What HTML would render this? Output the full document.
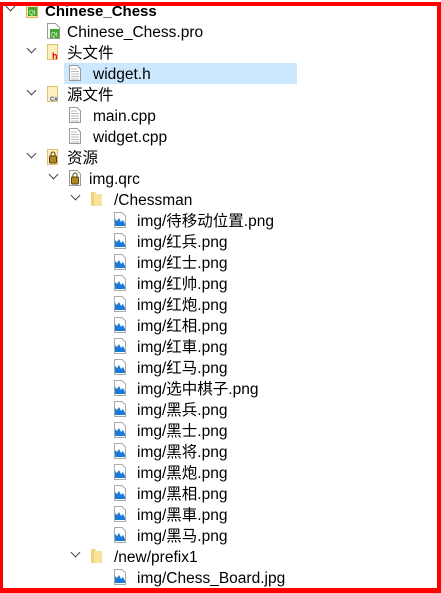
<!DOCTYPE html>
<html><head><meta charset="utf-8"><style>
body{margin:0;width:441px;height:593px;overflow:hidden;background:#fff;position:relative;font-family:"Liberation Sans","Noto Sans CJK SC",sans-serif;font-size:15.5px;color:#000}
.frame{position:absolute;left:0;top:2px;border-left:3px solid #f00;border-top:4px solid #f00;border-right:4px solid #f00;border-bottom:5px solid #f00;box-sizing:border-box;width:441px;height:591px}
.r{position:absolute;height:21px;line-height:23px;white-space:nowrap}
.sel{position:absolute;left:64px;top:63px;width:233px;height:21px;background:#cce8ff}
.ar{position:absolute;width:6px;height:6px;border-right:1.6px solid #444;border-bottom:1.6px solid #444;transform:rotate(45deg)}
svg{position:absolute}
</style></head><body>
<div class="sel"></div>

<div class="ar" style="left:7px;top:3px"></div>
<div class="ar" style="left:28px;top:45px"></div>
<div class="ar" style="left:28px;top:87px"></div>
<div class="ar" style="left:28px;top:150px"></div>
<div class="ar" style="left:50px;top:171px"></div>
<div class="ar" style="left:72px;top:192px"></div>
<div class="ar" style="left:72px;top:549px"></div>

<svg style="left:26px;top:2px" width="12" height="16"><rect x="0.5" y="0.5" width="11" height="15" fill="#fbe9a8" stroke="#d9b44a"/><rect x="2" y="5" width="9" height="9" fill="#41a62a"/><text x="3" y="12.5" font-size="6" fill="#fff" font-family="Liberation Sans">Qt</text></svg>
<svg style="left:47px;top:23px" width="13" height="16"><path d="M0.5 0.5H8.5L12.5 4.5V15.5H0.5Z" fill="#fff" stroke="#999"/><rect x="3" y="6" width="9" height="9" fill="#41a62a"/><text x="4" y="13.5" font-size="6" fill="#fff" font-family="Liberation Sans">Qt</text></svg>
<svg style="left:47px;top:44px" width="12" height="16"><rect x="0.5" y="0.5" width="10" height="15" fill="#fdf0c0" stroke="#e0c070"/><text x="5" y="15" font-size="9" font-weight="bold" fill="#d00" font-family="Liberation Sans">h</text></svg>
<svg style="left:47px;top:86px" width="14" height="16"><rect x="0.5" y="0.5" width="10" height="15" fill="#fdf0c0" stroke="#e0c070"/><text x="3" y="15" font-size="6" font-weight="bold" fill="#2a5fa8" font-family="Liberation Sans">C#</text></svg>
<svg style="left:47px;top:149px" width="12" height="16"><rect x="0.5" y="0.5" width="10" height="15" fill="#fdf0c0" stroke="#e0c070"/><rect x="2.5" y="7" width="7" height="7" rx="1" fill="#b08a20" stroke="#5a4010"/><path d="M4 7V5a2 2 0 0 1 4 0V7" fill="none" stroke="#5a4010"/></svg>
<svg style="left:69px;top:170px" width="12" height="16"><path d="M0.5 0.5H8L11.5 4V15.5H0.5Z" fill="#fff" stroke="#999"/><rect x="2.5" y="7" width="7" height="7" rx="1" fill="#b08a20" stroke="#5a4010"/><path d="M4 7V5a2 2 0 0 1 4 0V7" fill="none" stroke="#5a4010"/></svg>
<svg style="left:91px;top:191px" width="12" height="16"><path d="M0 1H4L5 3H11V15H0Z" fill="#f3d37a"/><rect x="3" y="3" width="8" height="12" fill="#f8e39c"/></svg>
<svg style="left:91px;top:548px" width="12" height="16"><path d="M0 1H4L5 3H11V15H0Z" fill="#f3d37a"/><rect x="3" y="3" width="8" height="12" fill="#f8e39c"/></svg>

<svg style="left:69px;top:65px" width="12" height="16"><path d="M0.5 0.5H8L11.5 4V15.5H0.5Z" fill="#fff" stroke="#999"/><path d="M2 4H8M2 6.5H10M2 9H10M2 11.5H10M2 14H10" stroke="#bbb"/></svg>
<svg style="left:69px;top:107px" width="12" height="16"><path d="M0.5 0.5H8L11.5 4V15.5H0.5Z" fill="#fff" stroke="#999"/><path d="M2 4H8M2 6.5H10M2 9H10M2 11.5H10M2 14H10" stroke="#bbb"/></svg>
<svg style="left:69px;top:128px" width="12" height="16"><path d="M0.5 0.5H8L11.5 4V15.5H0.5Z" fill="#fff" stroke="#999"/><path d="M2 4H8M2 6.5H10M2 9H10M2 11.5H10M2 14H10" stroke="#bbb"/></svg>

<div class="r" style="left:45px;top:0;font-weight:bold;font-size:15px">Chinese_Chess</div>
<div class="r" style="left:67px;top:21px">Chinese_Chess.pro</div>
<div class="r" style="left:67px;top:42px">头文件</div>
<div class="r" style="left:93px;top:63px">widget.h</div>
<div class="r" style="left:67px;top:84px">源文件</div>
<div class="r" style="left:93px;top:105px">main.cpp</div>
<div class="r" style="left:93px;top:126px">widget.cpp</div>
<div class="r" style="left:67px;top:147px">资源</div>
<div class="r" style="left:89px;top:168px">img.qrc</div>
<div class="r" style="left:114px;top:189px">/Chessman</div>
<div class="r" style="left:114px;top:546px">/new/prefix1</div>

<svg width="0" height="0"><defs><symbol id="im" viewBox="0 0 12 16"><path d="M0.5 0.5H8L11.5 4V15.5H0.5Z" fill="#fff" stroke="#aaa"/><path d="M1 14L1 7L3 9L5 6L7 10L9 8L11 12V14Z" fill="#1a7ad9"/></symbol></defs></svg>

<svg style="left:114px;top:212px" width="12" height="16"><use href="#im"/></svg>
<svg style="left:114px;top:233px" width="12" height="16"><use href="#im"/></svg>
<svg style="left:114px;top:254px" width="12" height="16"><use href="#im"/></svg>
<svg style="left:114px;top:275px" width="12" height="16"><use href="#im"/></svg>
<svg style="left:114px;top:296px" width="12" height="16"><use href="#im"/></svg>
<svg style="left:114px;top:317px" width="12" height="16"><use href="#im"/></svg>
<svg style="left:114px;top:338px" width="12" height="16"><use href="#im"/></svg>
<svg style="left:114px;top:359px" width="12" height="16"><use href="#im"/></svg>
<svg style="left:114px;top:380px" width="12" height="16"><use href="#im"/></svg>
<svg style="left:114px;top:401px" width="12" height="16"><use href="#im"/></svg>
<svg style="left:114px;top:422px" width="12" height="16"><use href="#im"/></svg>
<svg style="left:114px;top:443px" width="12" height="16"><use href="#im"/></svg>
<svg style="left:114px;top:464px" width="12" height="16"><use href="#im"/></svg>
<svg style="left:114px;top:485px" width="12" height="16"><use href="#im"/></svg>
<svg style="left:114px;top:506px" width="12" height="16"><use href="#im"/></svg>
<svg style="left:114px;top:527px" width="12" height="16"><use href="#im"/></svg>
<svg style="left:114px;top:569px" width="12" height="16"><use href="#im"/></svg>

<div class="r" style="left:137px;top:210px">img/待移动位置.png</div>
<div class="r" style="left:137px;top:231px">img/红兵.png</div>
<div class="r" style="left:137px;top:252px">img/红士.png</div>
<div class="r" style="left:137px;top:273px">img/红帅.png</div>
<div class="r" style="left:137px;top:294px">img/红炮.png</div>
<div class="r" style="left:137px;top:315px">img/红相.png</div>
<div class="r" style="left:137px;top:336px">img/红車.png</div>
<div class="r" style="left:137px;top:357px">img/红马.png</div>
<div class="r" style="left:137px;top:378px">img/选中棋子.png</div>
<div class="r" style="left:137px;top:399px">img/黑兵.png</div>
<div class="r" style="left:137px;top:420px">img/黑士.png</div>
<div class="r" style="left:137px;top:441px">img/黑将.png</div>
<div class="r" style="left:137px;top:462px">img/黑炮.png</div>
<div class="r" style="left:137px;top:483px">img/黑相.png</div>
<div class="r" style="left:137px;top:504px">img/黑車.png</div>
<div class="r" style="left:137px;top:525px">img/黑马.png</div>
<div class="r" style="left:137px;top:567px">img/Chess_Board.jpg</div>

<div class="frame"></div>
</body></html>
